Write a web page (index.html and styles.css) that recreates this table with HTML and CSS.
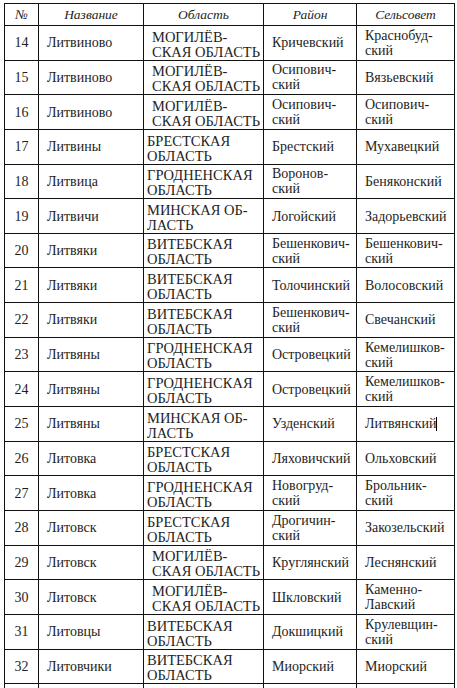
FILE: index.html
```html
<!DOCTYPE html>
<html>
<head>
<meta charset="utf-8">
<link rel="stylesheet" href="styles.css">
</head>
<body class="page">
<table class="grid">
<colgroup>
<col class="c-num"><col class="c-name"><col class="c-obl"><col class="c-ray"><col class="c-sel">
</colgroup>
<thead>
<tr class="head"><th class="hc">№</th><th class="hc">Название</th><th class="hc">Область</th><th class="hc">Район</th><th class="hc">Сельсовет</th></tr>
</thead>
<tbody>
<tr class="row"><td class="num">14</td><td class="cell">Литвиново</td><td class="obl ind">МОГИЛЁВ-<br>СКАЯ ОБЛАСТЬ</td><td class="cell">Кричевский</td><td class="cell">Краснобуд-<br>ский</td></tr>
<tr class="row"><td class="num">15</td><td class="cell">Литвиново</td><td class="obl ind">МОГИЛЁВ-<br>СКАЯ ОБЛАСТЬ</td><td class="cell">Осипович-<br>ский</td><td class="cell">Вязьевский</td></tr>
<tr class="row"><td class="num">16</td><td class="cell">Литвиново</td><td class="obl ind">МОГИЛЁВ-<br>СКАЯ ОБЛАСТЬ</td><td class="cell">Осипович-<br>ский</td><td class="cell">Осипович-<br>ский</td></tr>
<tr class="row"><td class="num">17</td><td class="cell">Литвины</td><td class="obl">БРЕСТСКАЯ<br>ОБЛАСТЬ</td><td class="cell">Брестский</td><td class="cell">Мухавецкий</td></tr>
<tr class="row"><td class="num">18</td><td class="cell">Литвица</td><td class="obl">ГРОДНЕНСКАЯ<br>ОБЛАСТЬ</td><td class="cell">Воронов-<br>ский</td><td class="cell">Беняконский</td></tr>
<tr class="row"><td class="num">19</td><td class="cell">Литвичи</td><td class="obl">МИНСКАЯ ОБ-<br>ЛАСТЬ</td><td class="cell">Логойский</td><td class="cell">Задорьевский</td></tr>
<tr class="row"><td class="num">20</td><td class="cell">Литвяки</td><td class="obl">ВИТЕБСКАЯ<br>ОБЛАСТЬ</td><td class="cell">Бешенкович-<br>ский</td><td class="cell">Бешенкович-<br>ский</td></tr>
<tr class="row"><td class="num">21</td><td class="cell">Литвяки</td><td class="obl">ВИТЕБСКАЯ<br>ОБЛАСТЬ</td><td class="cell">Толочинский</td><td class="cell">Волосовский</td></tr>
<tr class="row"><td class="num">22</td><td class="cell">Литвяки</td><td class="obl">ВИТЕБСКАЯ<br>ОБЛАСТЬ</td><td class="cell">Бешенкович-<br>ский</td><td class="cell">Свечанский</td></tr>
<tr class="row"><td class="num">23</td><td class="cell">Литвяны</td><td class="obl">ГРОДНЕНСКАЯ<br>ОБЛАСТЬ</td><td class="cell">Островецкий</td><td class="cell">Кемелишков-<br>ский</td></tr>
<tr class="row"><td class="num">24</td><td class="cell">Литвяны</td><td class="obl">ГРОДНЕНСКАЯ<br>ОБЛАСТЬ</td><td class="cell">Островецкий</td><td class="cell">Кемелишков-<br>ский</td></tr>
<tr class="row"><td class="num">25</td><td class="cell">Литвяны</td><td class="obl">МИНСКАЯ ОБ-<br>ЛАСТЬ</td><td class="cell">Узденский</td><td class="cell">Литвянский<span class="caret"></span></td></tr>
<tr class="row"><td class="num">26</td><td class="cell">Литовка</td><td class="obl">БРЕСТСКАЯ<br>ОБЛАСТЬ</td><td class="cell">Ляховичский</td><td class="cell">Ольховский</td></tr>
<tr class="row"><td class="num">27</td><td class="cell">Литовка</td><td class="obl">ГРОДНЕНСКАЯ<br>ОБЛАСТЬ</td><td class="cell">Новогруд-<br>ский</td><td class="cell">Брольник-<br>ский</td></tr>
<tr class="row"><td class="num">28</td><td class="cell">Литовск</td><td class="obl">БРЕСТСКАЯ<br>ОБЛАСТЬ</td><td class="cell">Дрогичин-<br>ский</td><td class="cell">Закозельский</td></tr>
<tr class="row"><td class="num">29</td><td class="cell">Литовск</td><td class="obl ind">МОГИЛЁВ-<br>СКАЯ ОБЛАСТЬ</td><td class="cell">Круглянский</td><td class="cell">Леснянский</td></tr>
<tr class="row"><td class="num">30</td><td class="cell">Литовск</td><td class="obl ind">МОГИЛЁВ-<br>СКАЯ ОБЛАСТЬ</td><td class="cell">Шкловский</td><td class="cell">Каменно-<br>Лавский</td></tr>
<tr class="row"><td class="num">31</td><td class="cell">Литовцы</td><td class="obl">ВИТЕБСКАЯ<br>ОБЛАСТЬ</td><td class="cell">Докшицкий</td><td class="cell">Крулевщин-<br>ский</td></tr>
<tr class="row"><td class="num">32</td><td class="cell">Литовчики</td><td class="obl">ВИТЕБСКАЯ<br>ОБЛАСТЬ</td><td class="cell">Миорский</td><td class="cell">Миорский</td></tr>
<tr class="row"><td class="num"></td><td class="cell"></td><td class="obl"></td><td class="cell"></td><td class="cell"></td></tr>
</tbody>
</table>
</body>
</html>
```

FILE: styles.css
```css
.page {
  margin: 0;
  padding: 3px 0 0 4px;
  background: #ffffff;
  font-family: "Liberation Serif", serif;
  font-size: 14px;
  color: #1e1e1e;
}
.grid {
  border-collapse: collapse;
  table-layout: fixed;
  width: 450px;
  border: 1px solid #111;
  font-family: "Liberation Serif", serif;
}
.c-num { width: 34px; }
.c-name { width: 105px; }
.c-obl { width: 120px; }
.c-ray { width: 93px; }
.c-sel { width: 98px; }
.hc, .cell, .num, .obl {
  border: 1px solid #111;
  line-height: 15px;
  vertical-align: middle;
  white-space: nowrap;
  overflow: hidden;
  font-family: "Liberation Serif", serif;
  font-size: 14px;
}
.hc {
  font-weight: normal;
  font-style: italic;
  font-size: 13.5px;
  text-align: center;
  padding: 0;
}
.cell {
  text-align: left;
  padding: 0 0 0 8px;
}
.obl {
  text-align: left;
  font-size: 14.5px;
  line-height: 15px;
  vertical-align: bottom;
  padding: 0 0 0 3px;
}
.obl.ind {
  padding-left: 8px;
}
.num {
  text-align: center;
  padding: 0;
}
.head {
  height: 22px;
}
.row {
  height: 34.65px;
}
.caret {
  display: inline-block;
  width: 1px;
  height: 14px;
  background: #000;
  vertical-align: -3px;
}
```
